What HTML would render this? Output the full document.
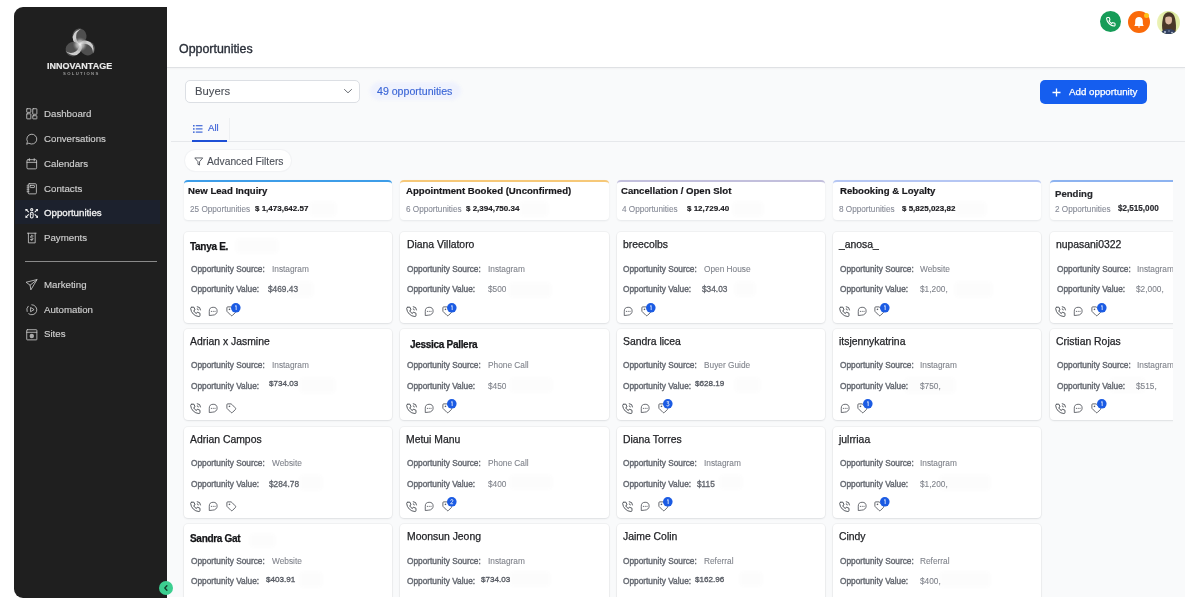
<!DOCTYPE html>
<html><head><meta charset="utf-8"><style>
*{margin:0;padding:0;box-sizing:border-box}
html,body{width:1200px;height:605px;overflow:hidden;background:#fff;font-family:"Liberation Sans", sans-serif}
.t{position:absolute;white-space:nowrap;z-index:3;will-change:transform}
.ic{position:absolute;z-index:3;overflow:visible}
.circ{position:absolute;border-radius:50%;z-index:3}
.circ svg{position:absolute;left:0;top:0}
#sb{position:absolute;left:14.3px;top:7px;width:152.8px;height:590.5px;background:#1f1f1f;border-radius:9px 0 0 9px}
#sbhl{position:absolute;left:14.5px;top:200px;width:145.7px;height:24.4px;background:#1c212d}
#sbdiv{position:absolute;left:24.6px;top:260.8px;width:132.2px;height:1px;background:#8a8a8a}
#toggle{position:absolute;left:159px;top:580.6px;width:14px;height:14px;border-radius:50%;background:#3ccf90;z-index:5}
#toggle svg{position:absolute;left:0;top:0}
#content{position:absolute;left:167.3px;top:67.6px;width:1017.5px;height:529.4px;background:#f9fafb}
#hdrline{position:absolute;left:167.3px;top:66.6px;width:1017.5px;height:1px;background:#dfe1e4;box-shadow:0 1px 2px rgba(0,0,0,.05);z-index:1}
#dd{position:absolute;left:184.7px;top:79.5px;width:175.3px;height:23.8px;background:#fff;border:1px solid #dcdfe4;border-radius:5px;z-index:1}
#pill{position:absolute;left:370px;top:82px;width:91px;height:18px;background:#eff2fd;border-radius:9px;z-index:1;filter:blur(1.5px)}
#btn{position:absolute;left:1039.7px;top:79.6px;width:107.4px;height:24.4px;background:#155eef;border-radius:5px;z-index:1}
#tabline{position:absolute;left:171px;top:140.8px;width:1014px;height:1px;background:#e6e8eb;z-index:1}
#tabul{position:absolute;left:191.9px;top:140px;width:35.1px;height:2px;background:#1d4fd6;z-index:2}
#tabsep{position:absolute;left:228.5px;top:118px;width:1px;height:22px;background:#eef0f2;z-index:1}
#af{position:absolute;left:185px;top:150px;width:106.4px;height:20.7px;background:#fff;border-radius:11px;box-shadow:0 0 0 1px #f2f3f5,0 1px 1.5px rgba(0,0,0,.03);z-index:1}
#kan{position:absolute;left:167.3px;top:170px;width:1005.5px;height:427px;overflow:hidden;z-index:1}
.hc{position:absolute;top:10px;height:40px;background:#fff;border-top:2px solid;border-radius:4px;box-shadow:0 1px 2px rgba(16,24,40,.08)}
.card{position:absolute;height:90.5px;background:#fff;border-radius:4px;box-shadow:0 0 0 1px rgba(16,24,40,.035),0 1px 2px rgba(16,24,40,.08)}
.patch{position:absolute;background:rgba(60,70,90,.016);border-radius:3px;filter:blur(1.5px);z-index:2}
.badge{position:absolute;width:9.5px;height:9.5px;border-radius:50%;background:#1b5be3;color:#fff;font-size:6.6px;line-height:9.5px;text-align:center;z-index:4;font-weight:400;will-change:transform}
#wrap{position:absolute;left:0;top:0;width:1200px;height:605px;}
</style></head><body><div id="wrap">
<div id="sb"></div>
<div id="sbhl"></div>
<svg class="ic" style="left:62px;top:26px" width="36" height="34" viewBox="0 0 36 34">
<defs><radialGradient id="lc" cx="50%" cy="50%" r="50%"><stop offset="0" stop-color="#f5f5f5" stop-opacity="0.95"/><stop offset="0.55" stop-color="#bdbdbd" stop-opacity="0.7"/><stop offset="1" stop-color="#7a7a7a" stop-opacity="0"/></radialGradient></defs>
<g transform="translate(18 18.5) rotate(-8) scale(1.1)">
<g><ellipse cx="0.6" cy="-7.6" rx="6.4" ry="6.9" fill="#4f4f4f"/><path d="M3.2 -14.2 Q-7 -12 -5.6 -4.5 Q-4.6 0.5 1 1.2 Q-2.4 -2.2 -2.6 -6.6 Q-2.4 -11.8 3.2 -14.2Z" fill="#d8d8d8" opacity="0.92"/></g><g transform="rotate(120)"><g><ellipse cx="0.6" cy="-7.6" rx="6.4" ry="6.9" fill="#4f4f4f"/><path d="M3.2 -14.2 Q-7 -12 -5.6 -4.5 Q-4.6 0.5 1 1.2 Q-2.4 -2.2 -2.6 -6.6 Q-2.4 -11.8 3.2 -14.2Z" fill="#d8d8d8" opacity="0.92"/></g></g><g transform="rotate(240)"><g><ellipse cx="0.6" cy="-7.6" rx="6.4" ry="6.9" fill="#4f4f4f"/><path d="M3.2 -14.2 Q-7 -12 -5.6 -4.5 Q-4.6 0.5 1 1.2 Q-2.4 -2.2 -2.6 -6.6 Q-2.4 -11.8 3.2 -14.2Z" fill="#d8d8d8" opacity="0.92"/></g></g>
<circle cx="0" cy="0" r="6.8" fill="url(#lc)"/>
</g></svg>
<div class="t" style="left:47.40px;top:61.98px;font-size:9.0px;line-height:9.0px;color:#ebebeb;font-weight:700;-webkit-text-stroke:0.15px #ebebeb;">INNOVANTAGE</div>
<div class="t" style="left:62.50px;top:71.64px;font-size:4.2px;line-height:4.2px;color:#9a9a9a;font-weight:700;letter-spacing:1.35px;">SOLUTIONS</div>
<svg class="ic" style="left:25.6px;top:108.40px" width="11.6" height="11.6" viewBox="0 0 24 24"><rect x="1.5" y="1.5" width="8.5" height="7.5" rx="0.8" fill="none" stroke="#cdcdcd" stroke-width="1.7" stroke-linecap="round" stroke-linejoin="round"/><rect x="14" y="1.5" width="8.5" height="11.5" rx="0.8" fill="none" stroke="#cdcdcd" stroke-width="1.7" stroke-linecap="round" stroke-linejoin="round"/><rect x="1.5" y="12" width="8.5" height="10.5" rx="0.8" fill="none" stroke="#cdcdcd" stroke-width="1.7" stroke-linecap="round" stroke-linejoin="round"/><rect x="14" y="16" width="8.5" height="6.5" rx="0.8" fill="none" stroke="#cdcdcd" stroke-width="1.7" stroke-linecap="round" stroke-linejoin="round"/></svg>
<div class="t" style="left:43.60px;top:109.08px;font-size:9.7px;line-height:9.7px;color:#cfcfcf;font-weight:400;-webkit-text-stroke:0.15px #cfcfcf;">Dashboard</div>
<svg class="ic" style="left:25.6px;top:133.20px" width="11.6" height="11.6" viewBox="0 0 24 24"><path d="M6.5 21.5A10.3 10.3 0 1 0 3 17.8L1.6 22.6Z" fill="none" stroke="#cdcdcd" stroke-width="1.7" stroke-linecap="round" stroke-linejoin="round"/></svg>
<div class="t" style="left:43.60px;top:133.88px;font-size:9.7px;line-height:9.7px;color:#cfcfcf;font-weight:400;-webkit-text-stroke:0.15px #cfcfcf;">Conversations</div>
<svg class="ic" style="left:25.6px;top:158.00px" width="11.6" height="11.6" viewBox="0 0 24 24"><rect x="2" y="3.5" width="20" height="19" rx="2.2" fill="none" stroke="#cdcdcd" stroke-width="1.7" stroke-linecap="round" stroke-linejoin="round"/><path d="M17 1.3v4.5M7 1.3v4.5M2 9h20" fill="none" stroke="#cdcdcd" stroke-width="1.7" stroke-linecap="round" stroke-linejoin="round"/></svg>
<div class="t" style="left:43.60px;top:158.68px;font-size:9.7px;line-height:9.7px;color:#cfcfcf;font-weight:400;-webkit-text-stroke:0.15px #cfcfcf;">Calendars</div>
<svg class="ic" style="left:25.6px;top:183.00px" width="11.6" height="11.6" viewBox="0 0 24 24"><rect x="4.5" y="1.5" width="17" height="21" rx="2.2" fill="none" stroke="#cdcdcd" stroke-width="1.7" stroke-linecap="round" stroke-linejoin="round"/><path d="M2.2 6h4M2.2 10h4M2.2 14h4M2.2 18h4" fill="none" stroke="#cdcdcd" stroke-width="1.7" stroke-linecap="round" stroke-linejoin="round"/><rect x="8.5" y="5" width="9" height="4.5" rx="1" fill="none" stroke="#cdcdcd" stroke-width="1.7" stroke-linecap="round" stroke-linejoin="round"/></svg>
<div class="t" style="left:43.60px;top:183.68px;font-size:9.7px;line-height:9.7px;color:#cfcfcf;font-weight:400;-webkit-text-stroke:0.15px #cfcfcf;">Contacts</div>
<svg class="ic" style="left:24.6px;top:207.6px" width="13.5" height="10.6" viewBox="0 0 28 22"><g fill="none" stroke="#f3f3f3" stroke-width="2.1" stroke-linecap="round" stroke-linejoin="round"><circle cx="14" cy="3.6" r="2.3"/><rect x="11.1" y="8.6" width="5.8" height="12" rx="2.9"/><path d="M2 3l5.2 5.2M2 19l5.2-5.2M26 3l-5.2 5.2M26 19l-5.2-5.2"/></g><g fill="#f3f3f3"><path d="M1 2h5.2L1 7.2z"/><path d="M1 20h5.2L1 14.8z"/><path d="M27 2h-5.2L27 7.2z"/><path d="M27 20h-5.2L27 14.8z"/><path d="M14 11.5l1.3 1.6-1.3 1.6-1.3-1.6z"/></g></svg>
<div class="t" style="left:43.60px;top:208.08px;font-size:9.7px;line-height:9.7px;color:#f2f2f2;font-weight:400;-webkit-text-stroke:0.3px #f2f2f2;">Opportunities</div>
<svg class="ic" style="left:25.6px;top:232.20px" width="11.6" height="11.6" viewBox="0 0 24 24"><path d="M3 2.5h18M5 2.5v20h14v-20" fill="none" stroke="#cdcdcd" stroke-width="1.7" stroke-linecap="round" stroke-linejoin="round"/><path d="M14.8 8.3h-3.5a1.9 1.9 0 0 0 0 3.8h1.4a1.9 1.9 0 0 1 0 3.8H9.2M12 6.5v1.8M12 15.9v1.8" fill="none" stroke="#cdcdcd" stroke-width="1.7" stroke-linecap="round" stroke-linejoin="round" stroke-width="1.5"/></svg>
<div class="t" style="left:43.60px;top:232.88px;font-size:9.7px;line-height:9.7px;color:#cfcfcf;font-weight:400;-webkit-text-stroke:0.15px #cfcfcf;">Payments</div>
<svg class="ic" style="left:25.6px;top:279.10px" width="11.6" height="11.6" viewBox="0 0 24 24"><path d="M22.5 1.8 10 22.5 8.5 12.8 0.8 7.2Z M22.5 1.8 8.5 12.8" fill="none" stroke="#cdcdcd" stroke-width="1.7" stroke-linecap="round" stroke-linejoin="round"/></svg>
<div class="t" style="left:43.60px;top:279.78px;font-size:9.7px;line-height:9.7px;color:#cfcfcf;font-weight:400;-webkit-text-stroke:0.15px #cfcfcf;">Marketing</div>
<svg class="ic" style="left:25.6px;top:303.85px" width="11.6" height="11.6" viewBox="0 0 24 24"><path d="M12 1.5a10.5 10.5 0 1 1-6.5 18.8" fill="none" stroke="#cdcdcd" stroke-width="1.7" stroke-linecap="round" stroke-linejoin="round"/><path d="M2.2 15.5A10.5 10.5 0 0 1 4.5 4.6" fill="none" stroke="#cdcdcd" stroke-width="1.7" stroke-linecap="round" stroke-linejoin="round"/><path d="M9.5 8v8l6.5-4z" fill="none" stroke="#cdcdcd" stroke-width="1.7" stroke-linecap="round" stroke-linejoin="round" stroke-width="1.6"/></svg>
<div class="t" style="left:43.60px;top:304.53px;font-size:9.7px;line-height:9.7px;color:#cfcfcf;font-weight:400;-webkit-text-stroke:0.15px #cfcfcf;">Automation</div>
<svg class="ic" style="left:25.6px;top:328.60px" width="11.6" height="11.6" viewBox="0 0 24 24"><rect x="1.5" y="1.5" width="21" height="21" rx="1.2" fill="none" stroke="#cdcdcd" stroke-width="1.7" stroke-linecap="round" stroke-linejoin="round"/><path d="M1.5 6.8h21" fill="none" stroke="#cdcdcd" stroke-width="1.7" stroke-linecap="round" stroke-linejoin="round"/><circle cx="12" cy="14.6" r="4.6" fill="#cdcdcd" opacity="0.8"/></svg>
<div class="t" style="left:43.60px;top:329.28px;font-size:9.7px;line-height:9.7px;color:#cfcfcf;font-weight:400;-webkit-text-stroke:0.15px #cfcfcf;">Sites</div>
<div id="sbdiv"></div>
<div id="toggle"><svg width="14" height="14" viewBox="0 0 14 14"><path d="M7.9 4.7 L5.8 7 L7.9 9.3" fill="none" stroke="#123f2c" stroke-width="1.35" stroke-linecap="round" stroke-linejoin="round"/></svg></div>
<div id="hdrline"></div>
<div class="t" style="left:178.70px;top:43.20px;font-size:12.4px;line-height:12.4px;color:#2a2f39;font-weight:400;-webkit-text-stroke:0.35px #2a2f39;">Opportunities</div>
<div id="content"></div>
<div class="circ" style="left:1099.6px;top:10.8px;width:21.7px;height:21.7px;background:#169c58"><svg width="21.7" height="21.7" viewBox="0 0 24 24"><path transform="translate(6.3 6.3) scale(0.47)" d="M22 16.92v3a2 2 0 0 1-2.18 2 19.79 19.79 0 0 1-8.63-3.07 19.5 19.5 0 0 1-6-6 19.79 19.79 0 0 1-3.07-8.67A2 2 0 0 1 4.11 2h3a2 2 0 0 1 2 1.72 12.84 12.84 0 0 0 .7 2.81 2 2 0 0 1-.45 2.11L8.09 9.91a16 16 0 0 0 6 6l1.27-1.27a2 2 0 0 1 2.11-.45 12.84 12.84 0 0 0 2.81.7A2 2 0 0 1 22 16.92z" fill="none" stroke="#fff" stroke-width="2.6"/></svg></div>
<div class="circ" style="left:1128px;top:10.8px;width:22px;height:22px;background:#fa6a0a"><svg width="22" height="22" viewBox="0 0 22 22"><path d="M6.3 15 C7.3 13.5 7.2 12 7.2 10 C7.2 7.6 8.8 6 11 6 C13.2 6 14.8 7.6 14.8 10 C14.8 12 14.7 13.5 15.7 15 Z" fill="#fff"/><path d="M9.8 15.5 H12.2 L11 17 Z" fill="#fff"/></svg></div>
<div class="circ" style="left:1144px;top:12.5px;width:5px;height:5px;background:#ffc21a"></div>
<div class="circ" style="left:1156.8px;top:11px;width:23px;height:23px;overflow:hidden">
<svg width="23" height="23" viewBox="0 0 23 23"><defs><linearGradient id="avbg" x1="0" y1="0" x2="1" y2="0"><stop offset="0" stop-color="#eef3b9"/><stop offset="0.5" stop-color="#d5e594"/><stop offset="1" stop-color="#e3eda9"/></linearGradient></defs>
<rect width="23" height="23" fill="url(#avbg)"/>
<path d="M6 21 C4.5 16 5 12 5.8 8 C6.5 3.5 8.5 1.2 11.8 1.2 C15.2 1.2 17.4 3.5 18.2 8 C18.9 12 19.5 16 18.5 21 Z" fill="#4a3828"/>
<ellipse cx="11.6" cy="8.8" rx="3.4" ry="4.6" fill="#dcb9a0"/>
<path d="M8.3 6.5 C9 4 10.5 3.6 11.8 3.6 C13.4 3.6 14.6 4.4 15 6.5 C13.5 5.2 10 5.2 8.3 6.5Z" fill="#4a3828"/>
<path d="M3.5 23 C4.5 19.5 7.5 18 11.5 18 C15.5 18 18.5 19.5 19.5 23Z" fill="#33415f"/>
<circle cx="8" cy="21" r="0.9" fill="#c9d2e8"/><circle cx="12" cy="20" r="0.7" fill="#9fb0d0"/><circle cx="15" cy="21.5" r="0.8" fill="#c9d2e8"/>
</svg></div>
<div id="dd"></div>
<div class="t" style="left:194.70px;top:85.77px;font-size:11.25px;line-height:11.25px;color:#4b4f57;font-weight:400;-webkit-text-stroke:0.1px #4b4f57;">Buyers</div>
<svg class="ic" style="left:343px;top:87px" width="10" height="8" viewBox="0 0 10 8"><path d="M1.5 2.5 L5 5.8 L8.5 2.5" fill="none" stroke="#6b6f76" stroke-width="1" stroke-linecap="round"/></svg>
<div id="pill"></div>
<div class="t" style="left:377.00px;top:85.72px;font-size:10.6px;line-height:10.6px;color:#3b66d6;font-weight:400;-webkit-text-stroke:0.15px #3b66d6;">49 opportunities</div>
<div id="btn"></div>
<svg class="ic" style="left:1051.5px;top:87.5px" width="9" height="9" viewBox="0 0 9 9"><path d="M4.5 0.5 V8.5 M0.5 4.5 H8.5" stroke="#fff" stroke-width="1.3"/></svg>
<div class="t" style="left:1069.00px;top:87.04px;font-size:9.75px;line-height:9.75px;color:#ffffff;font-weight:400;-webkit-text-stroke:0.25px #fff;">Add opportunity</div>
<div id="tabline"></div><div id="tabul"></div><div id="tabsep"></div>
<svg class="ic" style="left:192.7px;top:124.7px" width="10" height="8" viewBox="0 0 10 8"><g fill="#4169d8"><rect x="0" y="0" width="1.6" height="1.5"/><rect x="0" y="3.2" width="1.6" height="1.5"/><rect x="0" y="6.4" width="1.6" height="1.5"/><rect x="2.8" y="0.1" width="6.7" height="1.2"/><rect x="2.8" y="3.3" width="6.7" height="1.2"/><rect x="2.8" y="6.5" width="6.7" height="1.2"/></g></svg>
<div class="t" style="left:207.80px;top:123.47px;font-size:9.6px;line-height:9.6px;color:#3f63d8;font-weight:400;-webkit-text-stroke:0.2px #3f63d8;">All</div>
<div id="af"></div>
<svg class="ic" style="left:193.6px;top:157px" width="9.5" height="9" viewBox="0 0 24 22"><path d="M2 2h20l-8 9.5v8.5l-4-2v-6.5z" fill="none" stroke="#4b4f58" stroke-width="2.2" stroke-linejoin="round"/></svg>
<div class="t" style="left:206.60px;top:156.99px;font-size:10.28px;line-height:10.28px;color:#4b4f58;font-weight:400;-webkit-text-stroke:0.1px #4b4f58;">Advanced Filters</div>
<div id="kan">
<div class="hc" style="left:17.20px;width:207.70px;border-top-color:#3d9de8"></div>
<div class="t" style="left:21.20px;top:15.77px;font-size:9.6px;line-height:9.6px;color:#18181c;font-weight:700;-webkit-text-stroke:0.2px #18181c;">New Lead Inquiry</div>
<div class="t" style="left:22.50px;top:35.65px;font-size:8.2px;line-height:8.2px;color:#868a96;font-weight:400;-webkit-text-stroke:0.1px #868a96;">25 Opportunities</div>
<div class="t" style="left:87.70px;top:34.72px;font-size:8.0px;line-height:8.0px;color:#18181c;font-weight:700;-webkit-text-stroke:0.15px #18181c;">$ 1,473,642.57</div>
<div class="card" style="left:17.20px;top:62.00px;width:207.70px;height:90.6px"></div>
<div class="t" style="left:23.20px;top:71.63px;font-size:10.0px;line-height:10.0px;color:#141518;font-weight:700;letter-spacing:-0.3px;-webkit-text-stroke:0.25px #141518;">Tanya E.</div>
<div class="t" style="left:23.80px;top:94.67px;font-size:8.3px;line-height:8.3px;color:#666a72;font-weight:400;-webkit-text-stroke:0.4px #666a72;">Opportunity Source:</div>
<div class="t" style="left:104.40px;top:94.67px;font-size:8.3px;line-height:8.3px;color:#80848c;font-weight:400;-webkit-text-stroke:0.1px #80848c;">Instagram</div>
<div class="t" style="left:23.80px;top:115.17px;font-size:8.3px;line-height:8.3px;color:#666a72;font-weight:400;-webkit-text-stroke:0.4px #666a72;">Opportunity Value:</div>
<div class="t" style="left:101.20px;top:115.17px;font-size:8.3px;line-height:8.3px;color:#5f636b;font-weight:400;-webkit-text-stroke:0.3px #5f636b;">$469.43</div>
<svg class="ic" style="left:21.60px;top:135.00px" width="13.2" height="13.2" viewBox="0 0 24 24" fill="none" stroke="#50545b" stroke-width="1.75" stroke-linecap="round" stroke-linejoin="round"><path d="M5 4h4l2 5l-2.5 1.5a11 11 0 0 0 5 5l1.5 -2.5l5 2v4a2 2 0 0 1 -2 2a16 16 0 0 1 -15 -15a2 2 0 0 1 2 -2"/><path d="M15 7a2 2 0 0 1 2 2M15 3a6 6 0 0 1 6 6"/></svg>
<svg class="ic" style="left:40.70px;top:136.30px" width="10.2" height="10.2" viewBox="0 0 24 24" fill="none" stroke="#50545b" stroke-width="2" stroke-linecap="round" stroke-linejoin="round"><path d="M3 21.5V12.5A9.25 9.25 0 1 1 12.25 21.5Z"/><g fill="#5a5e65" stroke="none"><circle cx="8" cy="12.5" r="1.35"/><circle cx="12.25" cy="12.5" r="1.35"/><circle cx="16.5" cy="12.5" r="1.35"/></g></svg>
<svg class="ic" style="left:58.40px;top:136.00px" width="10.6" height="10.6" viewBox="0 0 24 24" fill="none" stroke="#50545b" stroke-width="2" stroke-linecap="round" stroke-linejoin="round"><path d="M12.586 2.586A2 2 0 0 0 11.172 2H4a2 2 0 0 0-2 2v7.172a2 2 0 0 0 .586 1.414l8.704 8.704a2.426 2.426 0 0 0 3.42 0l6.58-6.58a2.426 2.426 0 0 0 0-3.42z"/><circle cx="7.5" cy="7.5" r=".8"/></svg>
<svg class="ic" style="left:63.80px;top:132.90px;z-index:4" width="9.6" height="9.6" viewBox="-4.8 -4.8 9.6 9.6"><circle r="4.8" fill="#1b5be3"/><g transform="scale(0.78)"><path d="M-1 -1.9 L0.5 -2.9 V2.9" fill="none" stroke="#fff" stroke-width="1" stroke-linejoin="round"/></g></svg>
<div class="card" style="left:17.20px;top:158.50px;width:207.70px;height:91.6px"></div>
<div class="t" style="left:23.00px;top:166.79px;font-size:10.4px;line-height:10.4px;color:#232428;font-weight:400;-webkit-text-stroke:0.25px #232428;">Adrian x Jasmine</div>
<div class="t" style="left:23.80px;top:191.17px;font-size:8.3px;line-height:8.3px;color:#666a72;font-weight:400;-webkit-text-stroke:0.4px #666a72;">Opportunity Source:</div>
<div class="t" style="left:104.40px;top:191.17px;font-size:8.3px;line-height:8.3px;color:#80848c;font-weight:400;-webkit-text-stroke:0.1px #80848c;">Instagram</div>
<div class="t" style="left:23.80px;top:211.67px;font-size:8.3px;line-height:8.3px;color:#666a72;font-weight:400;-webkit-text-stroke:0.4px #666a72;">Opportunity Value:</div>
<div class="t" style="left:101.50px;top:210.14px;font-size:8.1px;line-height:8.1px;color:#5a5e66;font-weight:400;-webkit-text-stroke:0.35px #5a5e66;">$734.03</div>
<svg class="ic" style="left:21.60px;top:231.50px" width="13.2" height="13.2" viewBox="0 0 24 24" fill="none" stroke="#50545b" stroke-width="1.75" stroke-linecap="round" stroke-linejoin="round"><path d="M5 4h4l2 5l-2.5 1.5a11 11 0 0 0 5 5l1.5 -2.5l5 2v4a2 2 0 0 1 -2 2a16 16 0 0 1 -15 -15a2 2 0 0 1 2 -2"/><path d="M15 7a2 2 0 0 1 2 2M15 3a6 6 0 0 1 6 6"/></svg>
<svg class="ic" style="left:40.70px;top:232.80px" width="10.2" height="10.2" viewBox="0 0 24 24" fill="none" stroke="#50545b" stroke-width="2" stroke-linecap="round" stroke-linejoin="round"><path d="M3 21.5V12.5A9.25 9.25 0 1 1 12.25 21.5Z"/><g fill="#5a5e65" stroke="none"><circle cx="8" cy="12.5" r="1.35"/><circle cx="12.25" cy="12.5" r="1.35"/><circle cx="16.5" cy="12.5" r="1.35"/></g></svg>
<svg class="ic" style="left:58.40px;top:232.50px" width="10.6" height="10.6" viewBox="0 0 24 24" fill="none" stroke="#50545b" stroke-width="2" stroke-linecap="round" stroke-linejoin="round"><path d="M12.586 2.586A2 2 0 0 0 11.172 2H4a2 2 0 0 0-2 2v7.172a2 2 0 0 0 .586 1.414l8.704 8.704a2.426 2.426 0 0 0 3.42 0l6.58-6.58a2.426 2.426 0 0 0 0-3.42z"/><circle cx="7.5" cy="7.5" r=".8"/></svg>
<div class="card" style="left:17.20px;top:256.50px;width:207.70px;height:91.3px"></div>
<div class="t" style="left:23.00px;top:264.79px;font-size:10.4px;line-height:10.4px;color:#232428;font-weight:400;-webkit-text-stroke:0.25px #232428;">Adrian Campos</div>
<div class="t" style="left:23.80px;top:289.17px;font-size:8.3px;line-height:8.3px;color:#666a72;font-weight:400;-webkit-text-stroke:0.4px #666a72;">Opportunity Source:</div>
<div class="t" style="left:104.40px;top:289.17px;font-size:8.3px;line-height:8.3px;color:#80848c;font-weight:400;-webkit-text-stroke:0.1px #80848c;">Website</div>
<div class="t" style="left:23.80px;top:309.67px;font-size:8.3px;line-height:8.3px;color:#666a72;font-weight:400;-webkit-text-stroke:0.4px #666a72;">Opportunity Value:</div>
<div class="t" style="left:101.50px;top:309.67px;font-size:8.3px;line-height:8.3px;color:#5f636b;font-weight:400;-webkit-text-stroke:0.3px #5f636b;">$284.78</div>
<svg class="ic" style="left:21.60px;top:329.50px" width="13.2" height="13.2" viewBox="0 0 24 24" fill="none" stroke="#50545b" stroke-width="1.75" stroke-linecap="round" stroke-linejoin="round"><path d="M5 4h4l2 5l-2.5 1.5a11 11 0 0 0 5 5l1.5 -2.5l5 2v4a2 2 0 0 1 -2 2a16 16 0 0 1 -15 -15a2 2 0 0 1 2 -2"/><path d="M15 7a2 2 0 0 1 2 2M15 3a6 6 0 0 1 6 6"/></svg>
<svg class="ic" style="left:40.70px;top:330.80px" width="10.2" height="10.2" viewBox="0 0 24 24" fill="none" stroke="#50545b" stroke-width="2" stroke-linecap="round" stroke-linejoin="round"><path d="M3 21.5V12.5A9.25 9.25 0 1 1 12.25 21.5Z"/><g fill="#5a5e65" stroke="none"><circle cx="8" cy="12.5" r="1.35"/><circle cx="12.25" cy="12.5" r="1.35"/><circle cx="16.5" cy="12.5" r="1.35"/></g></svg>
<svg class="ic" style="left:58.40px;top:330.50px" width="10.6" height="10.6" viewBox="0 0 24 24" fill="none" stroke="#50545b" stroke-width="2" stroke-linecap="round" stroke-linejoin="round"><path d="M12.586 2.586A2 2 0 0 0 11.172 2H4a2 2 0 0 0-2 2v7.172a2 2 0 0 0 .586 1.414l8.704 8.704a2.426 2.426 0 0 0 3.42 0l6.58-6.58a2.426 2.426 0 0 0 0-3.42z"/><circle cx="7.5" cy="7.5" r=".8"/></svg>
<div class="card" style="left:17.20px;top:353.90px;width:207.70px;height:90.5px"></div>
<div class="t" style="left:22.80px;top:363.53px;font-size:10.0px;line-height:10.0px;color:#141518;font-weight:700;letter-spacing:-0.3px;-webkit-text-stroke:0.25px #141518;">Sandra Gat</div>
<div class="t" style="left:23.80px;top:386.57px;font-size:8.3px;line-height:8.3px;color:#666a72;font-weight:400;-webkit-text-stroke:0.4px #666a72;">Opportunity Source:</div>
<div class="t" style="left:104.40px;top:386.57px;font-size:8.3px;line-height:8.3px;color:#80848c;font-weight:400;-webkit-text-stroke:0.1px #80848c;">Website</div>
<div class="t" style="left:23.80px;top:407.07px;font-size:8.3px;line-height:8.3px;color:#666a72;font-weight:400;-webkit-text-stroke:0.4px #666a72;">Opportunity Value:</div>
<div class="t" style="left:98.90px;top:405.54px;font-size:8.1px;line-height:8.1px;color:#5a5e66;font-weight:400;-webkit-text-stroke:0.35px #5a5e66;">$403.91</div>
<div class="hc" style="left:233.20px;width:208.70px;border-top-color:#f6c878"></div>
<div class="t" style="left:238.70px;top:15.77px;font-size:9.6px;line-height:9.6px;color:#18181c;font-weight:700;-webkit-text-stroke:0.2px #18181c;">Appointment Booked (Unconfirmed)</div>
<div class="t" style="left:238.50px;top:35.65px;font-size:8.2px;line-height:8.2px;color:#868a96;font-weight:400;-webkit-text-stroke:0.1px #868a96;">6 Opportunities</div>
<div class="t" style="left:299.20px;top:34.72px;font-size:8.0px;line-height:8.0px;color:#18181c;font-weight:700;-webkit-text-stroke:0.15px #18181c;">$ 2,394,750.34</div>
<div class="card" style="left:233.20px;top:62.00px;width:208.70px;height:90.6px"></div>
<div class="t" style="left:239.40px;top:70.29px;font-size:10.4px;line-height:10.4px;color:#232428;font-weight:400;-webkit-text-stroke:0.25px #232428;">Diana Villatoro</div>
<div class="t" style="left:239.80px;top:94.67px;font-size:8.3px;line-height:8.3px;color:#666a72;font-weight:400;-webkit-text-stroke:0.4px #666a72;">Opportunity Source:</div>
<div class="t" style="left:320.40px;top:94.67px;font-size:8.3px;line-height:8.3px;color:#80848c;font-weight:400;-webkit-text-stroke:0.1px #80848c;">Instagram</div>
<div class="t" style="left:239.80px;top:115.17px;font-size:8.3px;line-height:8.3px;color:#666a72;font-weight:400;-webkit-text-stroke:0.4px #666a72;">Opportunity Value:</div>
<div class="t" style="left:320.50px;top:115.17px;font-size:8.3px;line-height:8.3px;color:#80848c;font-weight:400;-webkit-text-stroke:0.1px #80848c;">$500</div>
<svg class="ic" style="left:237.60px;top:135.00px" width="13.2" height="13.2" viewBox="0 0 24 24" fill="none" stroke="#50545b" stroke-width="1.75" stroke-linecap="round" stroke-linejoin="round"><path d="M5 4h4l2 5l-2.5 1.5a11 11 0 0 0 5 5l1.5 -2.5l5 2v4a2 2 0 0 1 -2 2a16 16 0 0 1 -15 -15a2 2 0 0 1 2 -2"/><path d="M15 7a2 2 0 0 1 2 2M15 3a6 6 0 0 1 6 6"/></svg>
<svg class="ic" style="left:256.70px;top:136.30px" width="10.2" height="10.2" viewBox="0 0 24 24" fill="none" stroke="#50545b" stroke-width="2" stroke-linecap="round" stroke-linejoin="round"><path d="M3 21.5V12.5A9.25 9.25 0 1 1 12.25 21.5Z"/><g fill="#5a5e65" stroke="none"><circle cx="8" cy="12.5" r="1.35"/><circle cx="12.25" cy="12.5" r="1.35"/><circle cx="16.5" cy="12.5" r="1.35"/></g></svg>
<svg class="ic" style="left:274.40px;top:136.00px" width="10.6" height="10.6" viewBox="0 0 24 24" fill="none" stroke="#50545b" stroke-width="2" stroke-linecap="round" stroke-linejoin="round"><path d="M12.586 2.586A2 2 0 0 0 11.172 2H4a2 2 0 0 0-2 2v7.172a2 2 0 0 0 .586 1.414l8.704 8.704a2.426 2.426 0 0 0 3.42 0l6.58-6.58a2.426 2.426 0 0 0 0-3.42z"/><circle cx="7.5" cy="7.5" r=".8"/></svg>
<svg class="ic" style="left:279.80px;top:132.90px;z-index:4" width="9.6" height="9.6" viewBox="-4.8 -4.8 9.6 9.6"><circle r="4.8" fill="#1b5be3"/><g transform="scale(0.78)"><path d="M-1 -1.9 L0.5 -2.9 V2.9" fill="none" stroke="#fff" stroke-width="1" stroke-linejoin="round"/></g></svg>
<div class="card" style="left:233.20px;top:158.50px;width:208.70px;height:91.6px"></div>
<div class="t" style="left:243.20px;top:169.83px;font-size:10.0px;line-height:10.0px;color:#141518;font-weight:700;letter-spacing:-0.3px;-webkit-text-stroke:0.25px #141518;">Jessica Pallera</div>
<div class="t" style="left:239.80px;top:191.17px;font-size:8.3px;line-height:8.3px;color:#666a72;font-weight:400;-webkit-text-stroke:0.4px #666a72;">Opportunity Source:</div>
<div class="t" style="left:320.40px;top:191.17px;font-size:8.3px;line-height:8.3px;color:#80848c;font-weight:400;-webkit-text-stroke:0.1px #80848c;">Phone Call</div>
<div class="t" style="left:239.80px;top:211.67px;font-size:8.3px;line-height:8.3px;color:#666a72;font-weight:400;-webkit-text-stroke:0.4px #666a72;">Opportunity Value:</div>
<div class="t" style="left:320.50px;top:211.67px;font-size:8.3px;line-height:8.3px;color:#80848c;font-weight:400;-webkit-text-stroke:0.1px #80848c;">$450</div>
<svg class="ic" style="left:237.60px;top:231.50px" width="13.2" height="13.2" viewBox="0 0 24 24" fill="none" stroke="#50545b" stroke-width="1.75" stroke-linecap="round" stroke-linejoin="round"><path d="M5 4h4l2 5l-2.5 1.5a11 11 0 0 0 5 5l1.5 -2.5l5 2v4a2 2 0 0 1 -2 2a16 16 0 0 1 -15 -15a2 2 0 0 1 2 -2"/><path d="M15 7a2 2 0 0 1 2 2M15 3a6 6 0 0 1 6 6"/></svg>
<svg class="ic" style="left:256.70px;top:232.80px" width="10.2" height="10.2" viewBox="0 0 24 24" fill="none" stroke="#50545b" stroke-width="2" stroke-linecap="round" stroke-linejoin="round"><path d="M3 21.5V12.5A9.25 9.25 0 1 1 12.25 21.5Z"/><g fill="#5a5e65" stroke="none"><circle cx="8" cy="12.5" r="1.35"/><circle cx="12.25" cy="12.5" r="1.35"/><circle cx="16.5" cy="12.5" r="1.35"/></g></svg>
<svg class="ic" style="left:274.40px;top:232.50px" width="10.6" height="10.6" viewBox="0 0 24 24" fill="none" stroke="#50545b" stroke-width="2" stroke-linecap="round" stroke-linejoin="round"><path d="M12.586 2.586A2 2 0 0 0 11.172 2H4a2 2 0 0 0-2 2v7.172a2 2 0 0 0 .586 1.414l8.704 8.704a2.426 2.426 0 0 0 3.42 0l6.58-6.58a2.426 2.426 0 0 0 0-3.42z"/><circle cx="7.5" cy="7.5" r=".8"/></svg>
<svg class="ic" style="left:279.80px;top:229.40px;z-index:4" width="9.6" height="9.6" viewBox="-4.8 -4.8 9.6 9.6"><circle r="4.8" fill="#1b5be3"/><g transform="scale(0.78)"><path d="M-1 -1.9 L0.5 -2.9 V2.9" fill="none" stroke="#fff" stroke-width="1" stroke-linejoin="round"/></g></svg>
<div class="card" style="left:233.20px;top:256.50px;width:208.70px;height:91.3px"></div>
<div class="t" style="left:239.20px;top:264.79px;font-size:10.4px;line-height:10.4px;color:#232428;font-weight:400;-webkit-text-stroke:0.25px #232428;">Metui Manu</div>
<div class="t" style="left:239.80px;top:289.17px;font-size:8.3px;line-height:8.3px;color:#666a72;font-weight:400;-webkit-text-stroke:0.4px #666a72;">Opportunity Source:</div>
<div class="t" style="left:320.40px;top:289.17px;font-size:8.3px;line-height:8.3px;color:#80848c;font-weight:400;-webkit-text-stroke:0.1px #80848c;">Phone Call</div>
<div class="t" style="left:239.80px;top:309.67px;font-size:8.3px;line-height:8.3px;color:#666a72;font-weight:400;-webkit-text-stroke:0.4px #666a72;">Opportunity Value:</div>
<div class="t" style="left:320.50px;top:309.67px;font-size:8.3px;line-height:8.3px;color:#80848c;font-weight:400;-webkit-text-stroke:0.1px #80848c;">$400</div>
<svg class="ic" style="left:237.60px;top:329.50px" width="13.2" height="13.2" viewBox="0 0 24 24" fill="none" stroke="#50545b" stroke-width="1.75" stroke-linecap="round" stroke-linejoin="round"><path d="M5 4h4l2 5l-2.5 1.5a11 11 0 0 0 5 5l1.5 -2.5l5 2v4a2 2 0 0 1 -2 2a16 16 0 0 1 -15 -15a2 2 0 0 1 2 -2"/><path d="M15 7a2 2 0 0 1 2 2M15 3a6 6 0 0 1 6 6"/></svg>
<svg class="ic" style="left:256.70px;top:330.80px" width="10.2" height="10.2" viewBox="0 0 24 24" fill="none" stroke="#50545b" stroke-width="2" stroke-linecap="round" stroke-linejoin="round"><path d="M3 21.5V12.5A9.25 9.25 0 1 1 12.25 21.5Z"/><g fill="#5a5e65" stroke="none"><circle cx="8" cy="12.5" r="1.35"/><circle cx="12.25" cy="12.5" r="1.35"/><circle cx="16.5" cy="12.5" r="1.35"/></g></svg>
<svg class="ic" style="left:274.40px;top:330.50px" width="10.6" height="10.6" viewBox="0 0 24 24" fill="none" stroke="#50545b" stroke-width="2" stroke-linecap="round" stroke-linejoin="round"><path d="M12.586 2.586A2 2 0 0 0 11.172 2H4a2 2 0 0 0-2 2v7.172a2 2 0 0 0 .586 1.414l8.704 8.704a2.426 2.426 0 0 0 3.42 0l6.58-6.58a2.426 2.426 0 0 0 0-3.42z"/><circle cx="7.5" cy="7.5" r=".8"/></svg>
<svg class="ic" style="left:279.80px;top:327.40px;z-index:4" width="9.6" height="9.6" viewBox="-4.8 -4.8 9.6 9.6"><circle r="4.8" fill="#1b5be3"/><g transform="scale(0.78)"><path d="M-1.5 -1.5 Q-1.3 -2.9 0 -2.9 Q1.4 -2.9 1.4 -1.5 Q1.4 -0.6 0.2 0.5 L-1.6 2.5 H1.7" fill="none" stroke="#fff" stroke-width="0.95" stroke-linejoin="round"/></g></svg>
<div class="card" style="left:233.20px;top:353.90px;width:208.70px;height:90.5px"></div>
<div class="t" style="left:239.40px;top:362.19px;font-size:10.4px;line-height:10.4px;color:#232428;font-weight:400;-webkit-text-stroke:0.25px #232428;">Moonsun Jeong</div>
<div class="t" style="left:239.80px;top:386.57px;font-size:8.3px;line-height:8.3px;color:#666a72;font-weight:400;-webkit-text-stroke:0.4px #666a72;">Opportunity Source:</div>
<div class="t" style="left:320.40px;top:386.57px;font-size:8.3px;line-height:8.3px;color:#80848c;font-weight:400;-webkit-text-stroke:0.1px #80848c;">Instagram</div>
<div class="t" style="left:239.80px;top:407.07px;font-size:8.3px;line-height:8.3px;color:#666a72;font-weight:400;-webkit-text-stroke:0.4px #666a72;">Opportunity Value:</div>
<div class="t" style="left:313.50px;top:405.54px;font-size:8.1px;line-height:8.1px;color:#5a5e66;font-weight:400;-webkit-text-stroke:0.35px #5a5e66;">$734.03</div>
<div class="hc" style="left:449.50px;width:208.20px;border-top-color:#c2bfdc"></div>
<div class="t" style="left:454.10px;top:15.77px;font-size:9.6px;line-height:9.6px;color:#18181c;font-weight:700;-webkit-text-stroke:0.2px #18181c;">Cancellation / Open Slot</div>
<div class="t" style="left:454.80px;top:35.65px;font-size:8.2px;line-height:8.2px;color:#868a96;font-weight:400;-webkit-text-stroke:0.1px #868a96;">4 Opportunities</div>
<div class="t" style="left:519.70px;top:34.72px;font-size:8.0px;line-height:8.0px;color:#18181c;font-weight:700;-webkit-text-stroke:0.15px #18181c;">$ 12,729.40</div>
<div class="card" style="left:449.50px;top:62.00px;width:208.20px;height:90.6px"></div>
<div class="t" style="left:455.70px;top:70.29px;font-size:10.4px;line-height:10.4px;color:#232428;font-weight:400;-webkit-text-stroke:0.25px #232428;">breecolbs</div>
<div class="t" style="left:456.10px;top:94.67px;font-size:8.3px;line-height:8.3px;color:#666a72;font-weight:400;-webkit-text-stroke:0.4px #666a72;">Opportunity Source:</div>
<div class="t" style="left:536.70px;top:94.67px;font-size:8.3px;line-height:8.3px;color:#80848c;font-weight:400;-webkit-text-stroke:0.1px #80848c;">Open House</div>
<div class="t" style="left:456.10px;top:115.17px;font-size:8.3px;line-height:8.3px;color:#666a72;font-weight:400;-webkit-text-stroke:0.4px #666a72;">Opportunity Value:</div>
<div class="t" style="left:534.30px;top:115.17px;font-size:8.3px;line-height:8.3px;color:#5f636b;font-weight:400;-webkit-text-stroke:0.3px #5f636b;">$34.03</div>
<svg class="ic" style="left:456.00px;top:136.30px" width="10.2" height="10.2" viewBox="0 0 24 24" fill="none" stroke="#50545b" stroke-width="2" stroke-linecap="round" stroke-linejoin="round"><path d="M3 21.5V12.5A9.25 9.25 0 1 1 12.25 21.5Z"/><g fill="#5a5e65" stroke="none"><circle cx="8" cy="12.5" r="1.35"/><circle cx="12.25" cy="12.5" r="1.35"/><circle cx="16.5" cy="12.5" r="1.35"/></g></svg>
<svg class="ic" style="left:473.70px;top:136.00px" width="10.6" height="10.6" viewBox="0 0 24 24" fill="none" stroke="#50545b" stroke-width="2" stroke-linecap="round" stroke-linejoin="round"><path d="M12.586 2.586A2 2 0 0 0 11.172 2H4a2 2 0 0 0-2 2v7.172a2 2 0 0 0 .586 1.414l8.704 8.704a2.426 2.426 0 0 0 3.42 0l6.58-6.58a2.426 2.426 0 0 0 0-3.42z"/><circle cx="7.5" cy="7.5" r=".8"/></svg>
<svg class="ic" style="left:479.10px;top:132.90px;z-index:4" width="9.6" height="9.6" viewBox="-4.8 -4.8 9.6 9.6"><circle r="4.8" fill="#1b5be3"/><g transform="scale(0.78)"><path d="M-1 -1.9 L0.5 -2.9 V2.9" fill="none" stroke="#fff" stroke-width="1" stroke-linejoin="round"/></g></svg>
<div class="card" style="left:449.50px;top:158.50px;width:208.20px;height:91.6px"></div>
<div class="t" style="left:455.70px;top:166.79px;font-size:10.4px;line-height:10.4px;color:#232428;font-weight:400;-webkit-text-stroke:0.25px #232428;">Sandra licea</div>
<div class="t" style="left:456.10px;top:191.17px;font-size:8.3px;line-height:8.3px;color:#666a72;font-weight:400;-webkit-text-stroke:0.4px #666a72;">Opportunity Source:</div>
<div class="t" style="left:536.70px;top:191.17px;font-size:8.3px;line-height:8.3px;color:#80848c;font-weight:400;-webkit-text-stroke:0.1px #80848c;">Buyer Guide</div>
<div class="t" style="left:456.10px;top:211.67px;font-size:8.3px;line-height:8.3px;color:#666a72;font-weight:400;-webkit-text-stroke:0.4px #666a72;">Opportunity Value:</div>
<div class="t" style="left:528.00px;top:210.14px;font-size:8.1px;line-height:8.1px;color:#5a5e66;font-weight:400;-webkit-text-stroke:0.35px #5a5e66;">$628.19</div>
<svg class="ic" style="left:453.90px;top:231.50px" width="13.2" height="13.2" viewBox="0 0 24 24" fill="none" stroke="#50545b" stroke-width="1.75" stroke-linecap="round" stroke-linejoin="round"><path d="M5 4h4l2 5l-2.5 1.5a11 11 0 0 0 5 5l1.5 -2.5l5 2v4a2 2 0 0 1 -2 2a16 16 0 0 1 -15 -15a2 2 0 0 1 2 -2"/><path d="M15 7a2 2 0 0 1 2 2M15 3a6 6 0 0 1 6 6"/></svg>
<svg class="ic" style="left:473.00px;top:232.80px" width="10.2" height="10.2" viewBox="0 0 24 24" fill="none" stroke="#50545b" stroke-width="2" stroke-linecap="round" stroke-linejoin="round"><path d="M3 21.5V12.5A9.25 9.25 0 1 1 12.25 21.5Z"/><g fill="#5a5e65" stroke="none"><circle cx="8" cy="12.5" r="1.35"/><circle cx="12.25" cy="12.5" r="1.35"/><circle cx="16.5" cy="12.5" r="1.35"/></g></svg>
<svg class="ic" style="left:490.70px;top:232.50px" width="10.6" height="10.6" viewBox="0 0 24 24" fill="none" stroke="#50545b" stroke-width="2" stroke-linecap="round" stroke-linejoin="round"><path d="M12.586 2.586A2 2 0 0 0 11.172 2H4a2 2 0 0 0-2 2v7.172a2 2 0 0 0 .586 1.414l8.704 8.704a2.426 2.426 0 0 0 3.42 0l6.58-6.58a2.426 2.426 0 0 0 0-3.42z"/><circle cx="7.5" cy="7.5" r=".8"/></svg>
<svg class="ic" style="left:496.10px;top:229.40px;z-index:4" width="9.6" height="9.6" viewBox="-4.8 -4.8 9.6 9.6"><circle r="4.8" fill="#1b5be3"/><g transform="scale(0.78)"><path d="M-1.4 -2.7 H1.3 L-0.1 -0.5 Q1.6 -0.5 1.6 1.1 Q1.6 2.8 0 2.8 Q-1.2 2.8 -1.6 1.8" fill="none" stroke="#fff" stroke-width="0.95" stroke-linejoin="round"/></g></svg>
<div class="card" style="left:449.50px;top:256.50px;width:208.20px;height:91.3px"></div>
<div class="t" style="left:455.70px;top:264.79px;font-size:10.4px;line-height:10.4px;color:#232428;font-weight:400;-webkit-text-stroke:0.25px #232428;">Diana Torres</div>
<div class="t" style="left:456.10px;top:289.17px;font-size:8.3px;line-height:8.3px;color:#666a72;font-weight:400;-webkit-text-stroke:0.4px #666a72;">Opportunity Source:</div>
<div class="t" style="left:536.70px;top:289.17px;font-size:8.3px;line-height:8.3px;color:#80848c;font-weight:400;-webkit-text-stroke:0.1px #80848c;">Instagram</div>
<div class="t" style="left:456.10px;top:309.67px;font-size:8.3px;line-height:8.3px;color:#666a72;font-weight:400;-webkit-text-stroke:0.4px #666a72;">Opportunity Value:</div>
<div class="t" style="left:529.50px;top:309.67px;font-size:8.3px;line-height:8.3px;color:#5f636b;font-weight:400;-webkit-text-stroke:0.3px #5f636b;">$115</div>
<svg class="ic" style="left:453.90px;top:329.50px" width="13.2" height="13.2" viewBox="0 0 24 24" fill="none" stroke="#50545b" stroke-width="1.75" stroke-linecap="round" stroke-linejoin="round"><path d="M5 4h4l2 5l-2.5 1.5a11 11 0 0 0 5 5l1.5 -2.5l5 2v4a2 2 0 0 1 -2 2a16 16 0 0 1 -15 -15a2 2 0 0 1 2 -2"/><path d="M15 7a2 2 0 0 1 2 2M15 3a6 6 0 0 1 6 6"/></svg>
<svg class="ic" style="left:473.00px;top:330.80px" width="10.2" height="10.2" viewBox="0 0 24 24" fill="none" stroke="#50545b" stroke-width="2" stroke-linecap="round" stroke-linejoin="round"><path d="M3 21.5V12.5A9.25 9.25 0 1 1 12.25 21.5Z"/><g fill="#5a5e65" stroke="none"><circle cx="8" cy="12.5" r="1.35"/><circle cx="12.25" cy="12.5" r="1.35"/><circle cx="16.5" cy="12.5" r="1.35"/></g></svg>
<svg class="ic" style="left:490.70px;top:330.50px" width="10.6" height="10.6" viewBox="0 0 24 24" fill="none" stroke="#50545b" stroke-width="2" stroke-linecap="round" stroke-linejoin="round"><path d="M12.586 2.586A2 2 0 0 0 11.172 2H4a2 2 0 0 0-2 2v7.172a2 2 0 0 0 .586 1.414l8.704 8.704a2.426 2.426 0 0 0 3.42 0l6.58-6.58a2.426 2.426 0 0 0 0-3.42z"/><circle cx="7.5" cy="7.5" r=".8"/></svg>
<svg class="ic" style="left:496.10px;top:327.40px;z-index:4" width="9.6" height="9.6" viewBox="-4.8 -4.8 9.6 9.6"><circle r="4.8" fill="#1b5be3"/><g transform="scale(0.78)"><path d="M-1 -1.9 L0.5 -2.9 V2.9" fill="none" stroke="#fff" stroke-width="1" stroke-linejoin="round"/></g></svg>
<div class="card" style="left:449.50px;top:353.90px;width:208.20px;height:90.5px"></div>
<div class="t" style="left:455.70px;top:362.19px;font-size:10.4px;line-height:10.4px;color:#232428;font-weight:400;-webkit-text-stroke:0.25px #232428;">Jaime Colin</div>
<div class="t" style="left:456.10px;top:386.57px;font-size:8.3px;line-height:8.3px;color:#666a72;font-weight:400;-webkit-text-stroke:0.4px #666a72;">Opportunity Source:</div>
<div class="t" style="left:536.70px;top:386.57px;font-size:8.3px;line-height:8.3px;color:#80848c;font-weight:400;-webkit-text-stroke:0.1px #80848c;">Referral</div>
<div class="t" style="left:456.10px;top:407.07px;font-size:8.3px;line-height:8.3px;color:#666a72;font-weight:400;-webkit-text-stroke:0.4px #666a72;">Opportunity Value:</div>
<div class="t" style="left:528.10px;top:405.54px;font-size:8.1px;line-height:8.1px;color:#5a5e66;font-weight:400;-webkit-text-stroke:0.35px #5a5e66;">$162.96</div>
<div class="hc" style="left:666.00px;width:208.00px;border-top-color:#b5c6f3"></div>
<div class="t" style="left:672.50px;top:15.77px;font-size:9.6px;line-height:9.6px;color:#18181c;font-weight:700;-webkit-text-stroke:0.2px #18181c;">Rebooking &amp; Loyalty</div>
<div class="t" style="left:671.30px;top:35.65px;font-size:8.2px;line-height:8.2px;color:#868a96;font-weight:400;-webkit-text-stroke:0.1px #868a96;">8 Opportunities</div>
<div class="t" style="left:734.70px;top:34.72px;font-size:8.0px;line-height:8.0px;color:#18181c;font-weight:700;-webkit-text-stroke:0.15px #18181c;">$ 5,825,023,82</div>
<div class="card" style="left:666.00px;top:62.00px;width:208.00px;height:90.6px"></div>
<div class="t" style="left:672.00px;top:70.29px;font-size:10.4px;line-height:10.4px;color:#232428;font-weight:400;-webkit-text-stroke:0.25px #232428;">_anosa_</div>
<div class="t" style="left:672.60px;top:94.67px;font-size:8.3px;line-height:8.3px;color:#666a72;font-weight:400;-webkit-text-stroke:0.4px #666a72;">Opportunity Source:</div>
<div class="t" style="left:753.20px;top:94.67px;font-size:8.3px;line-height:8.3px;color:#80848c;font-weight:400;-webkit-text-stroke:0.1px #80848c;">Website</div>
<div class="t" style="left:672.60px;top:115.17px;font-size:8.3px;line-height:8.3px;color:#666a72;font-weight:400;-webkit-text-stroke:0.4px #666a72;">Opportunity Value:</div>
<div class="t" style="left:752.80px;top:115.17px;font-size:8.3px;line-height:8.3px;color:#80848c;font-weight:400;-webkit-text-stroke:0.1px #80848c;">$1,200,</div>
<svg class="ic" style="left:670.40px;top:135.00px" width="13.2" height="13.2" viewBox="0 0 24 24" fill="none" stroke="#50545b" stroke-width="1.75" stroke-linecap="round" stroke-linejoin="round"><path d="M5 4h4l2 5l-2.5 1.5a11 11 0 0 0 5 5l1.5 -2.5l5 2v4a2 2 0 0 1 -2 2a16 16 0 0 1 -15 -15a2 2 0 0 1 2 -2"/><path d="M15 7a2 2 0 0 1 2 2M15 3a6 6 0 0 1 6 6"/></svg>
<svg class="ic" style="left:689.50px;top:136.30px" width="10.2" height="10.2" viewBox="0 0 24 24" fill="none" stroke="#50545b" stroke-width="2" stroke-linecap="round" stroke-linejoin="round"><path d="M3 21.5V12.5A9.25 9.25 0 1 1 12.25 21.5Z"/><g fill="#5a5e65" stroke="none"><circle cx="8" cy="12.5" r="1.35"/><circle cx="12.25" cy="12.5" r="1.35"/><circle cx="16.5" cy="12.5" r="1.35"/></g></svg>
<svg class="ic" style="left:707.20px;top:136.00px" width="10.6" height="10.6" viewBox="0 0 24 24" fill="none" stroke="#50545b" stroke-width="2" stroke-linecap="round" stroke-linejoin="round"><path d="M12.586 2.586A2 2 0 0 0 11.172 2H4a2 2 0 0 0-2 2v7.172a2 2 0 0 0 .586 1.414l8.704 8.704a2.426 2.426 0 0 0 3.42 0l6.58-6.58a2.426 2.426 0 0 0 0-3.42z"/><circle cx="7.5" cy="7.5" r=".8"/></svg>
<svg class="ic" style="left:712.60px;top:132.90px;z-index:4" width="9.6" height="9.6" viewBox="-4.8 -4.8 9.6 9.6"><circle r="4.8" fill="#1b5be3"/><g transform="scale(0.78)"><path d="M-1 -1.9 L0.5 -2.9 V2.9" fill="none" stroke="#fff" stroke-width="1" stroke-linejoin="round"/></g></svg>
<div class="card" style="left:666.00px;top:158.50px;width:208.00px;height:91.6px"></div>
<div class="t" style="left:672.00px;top:166.79px;font-size:10.4px;line-height:10.4px;color:#232428;font-weight:400;-webkit-text-stroke:0.25px #232428;">itsjennykatrina</div>
<div class="t" style="left:672.60px;top:191.17px;font-size:8.3px;line-height:8.3px;color:#666a72;font-weight:400;-webkit-text-stroke:0.4px #666a72;">Opportunity Source:</div>
<div class="t" style="left:753.20px;top:191.17px;font-size:8.3px;line-height:8.3px;color:#80848c;font-weight:400;-webkit-text-stroke:0.1px #80848c;">Instagram</div>
<div class="t" style="left:672.60px;top:211.67px;font-size:8.3px;line-height:8.3px;color:#666a72;font-weight:400;-webkit-text-stroke:0.4px #666a72;">Opportunity Value:</div>
<div class="t" style="left:752.80px;top:211.67px;font-size:8.3px;line-height:8.3px;color:#80848c;font-weight:400;-webkit-text-stroke:0.1px #80848c;">$750,</div>
<svg class="ic" style="left:672.50px;top:232.80px" width="10.2" height="10.2" viewBox="0 0 24 24" fill="none" stroke="#50545b" stroke-width="2" stroke-linecap="round" stroke-linejoin="round"><path d="M3 21.5V12.5A9.25 9.25 0 1 1 12.25 21.5Z"/><g fill="#5a5e65" stroke="none"><circle cx="8" cy="12.5" r="1.35"/><circle cx="12.25" cy="12.5" r="1.35"/><circle cx="16.5" cy="12.5" r="1.35"/></g></svg>
<svg class="ic" style="left:690.20px;top:232.50px" width="10.6" height="10.6" viewBox="0 0 24 24" fill="none" stroke="#50545b" stroke-width="2" stroke-linecap="round" stroke-linejoin="round"><path d="M12.586 2.586A2 2 0 0 0 11.172 2H4a2 2 0 0 0-2 2v7.172a2 2 0 0 0 .586 1.414l8.704 8.704a2.426 2.426 0 0 0 3.42 0l6.58-6.58a2.426 2.426 0 0 0 0-3.42z"/><circle cx="7.5" cy="7.5" r=".8"/></svg>
<svg class="ic" style="left:695.60px;top:229.40px;z-index:4" width="9.6" height="9.6" viewBox="-4.8 -4.8 9.6 9.6"><circle r="4.8" fill="#1b5be3"/><g transform="scale(0.78)"><path d="M-1 -1.9 L0.5 -2.9 V2.9" fill="none" stroke="#fff" stroke-width="1" stroke-linejoin="round"/></g></svg>
<div class="card" style="left:666.00px;top:256.50px;width:208.00px;height:91.3px"></div>
<div class="t" style="left:672.00px;top:264.79px;font-size:10.4px;line-height:10.4px;color:#232428;font-weight:400;-webkit-text-stroke:0.25px #232428;">julrriaa</div>
<div class="t" style="left:672.60px;top:289.17px;font-size:8.3px;line-height:8.3px;color:#666a72;font-weight:400;-webkit-text-stroke:0.4px #666a72;">Opportunity Source:</div>
<div class="t" style="left:753.20px;top:289.17px;font-size:8.3px;line-height:8.3px;color:#80848c;font-weight:400;-webkit-text-stroke:0.1px #80848c;">Instagram</div>
<div class="t" style="left:672.60px;top:309.67px;font-size:8.3px;line-height:8.3px;color:#666a72;font-weight:400;-webkit-text-stroke:0.4px #666a72;">Opportunity Value:</div>
<div class="t" style="left:752.80px;top:309.67px;font-size:8.3px;line-height:8.3px;color:#80848c;font-weight:400;-webkit-text-stroke:0.1px #80848c;">$1,200,</div>
<svg class="ic" style="left:670.40px;top:329.50px" width="13.2" height="13.2" viewBox="0 0 24 24" fill="none" stroke="#50545b" stroke-width="1.75" stroke-linecap="round" stroke-linejoin="round"><path d="M5 4h4l2 5l-2.5 1.5a11 11 0 0 0 5 5l1.5 -2.5l5 2v4a2 2 0 0 1 -2 2a16 16 0 0 1 -15 -15a2 2 0 0 1 2 -2"/><path d="M15 7a2 2 0 0 1 2 2M15 3a6 6 0 0 1 6 6"/></svg>
<svg class="ic" style="left:689.50px;top:330.80px" width="10.2" height="10.2" viewBox="0 0 24 24" fill="none" stroke="#50545b" stroke-width="2" stroke-linecap="round" stroke-linejoin="round"><path d="M3 21.5V12.5A9.25 9.25 0 1 1 12.25 21.5Z"/><g fill="#5a5e65" stroke="none"><circle cx="8" cy="12.5" r="1.35"/><circle cx="12.25" cy="12.5" r="1.35"/><circle cx="16.5" cy="12.5" r="1.35"/></g></svg>
<svg class="ic" style="left:707.20px;top:330.50px" width="10.6" height="10.6" viewBox="0 0 24 24" fill="none" stroke="#50545b" stroke-width="2" stroke-linecap="round" stroke-linejoin="round"><path d="M12.586 2.586A2 2 0 0 0 11.172 2H4a2 2 0 0 0-2 2v7.172a2 2 0 0 0 .586 1.414l8.704 8.704a2.426 2.426 0 0 0 3.42 0l6.58-6.58a2.426 2.426 0 0 0 0-3.42z"/><circle cx="7.5" cy="7.5" r=".8"/></svg>
<svg class="ic" style="left:712.60px;top:327.40px;z-index:4" width="9.6" height="9.6" viewBox="-4.8 -4.8 9.6 9.6"><circle r="4.8" fill="#1b5be3"/><g transform="scale(0.78)"><path d="M-1 -1.9 L0.5 -2.9 V2.9" fill="none" stroke="#fff" stroke-width="1" stroke-linejoin="round"/></g></svg>
<div class="card" style="left:666.00px;top:353.90px;width:208.00px;height:90.5px"></div>
<div class="t" style="left:672.00px;top:362.19px;font-size:10.4px;line-height:10.4px;color:#232428;font-weight:400;-webkit-text-stroke:0.25px #232428;">Cindy</div>
<div class="t" style="left:672.60px;top:386.57px;font-size:8.3px;line-height:8.3px;color:#666a72;font-weight:400;-webkit-text-stroke:0.4px #666a72;">Opportunity Source:</div>
<div class="t" style="left:753.20px;top:386.57px;font-size:8.3px;line-height:8.3px;color:#80848c;font-weight:400;-webkit-text-stroke:0.1px #80848c;">Referral</div>
<div class="t" style="left:672.60px;top:407.07px;font-size:8.3px;line-height:8.3px;color:#666a72;font-weight:400;-webkit-text-stroke:0.4px #666a72;">Opportunity Value:</div>
<div class="t" style="left:752.80px;top:407.07px;font-size:8.3px;line-height:8.3px;color:#80848c;font-weight:400;-webkit-text-stroke:0.1px #80848c;">$400,</div>
<div class="hc" style="left:882.70px;width:208.00px;border-top-color:#8db3f0"></div>
<div class="t" style="left:887.45px;top:19.17px;font-size:9.6px;line-height:9.6px;color:#28292e;font-weight:700;-webkit-text-stroke:0.2px #28292e;">Pending</div>
<div class="t" style="left:888.00px;top:35.65px;font-size:8.2px;line-height:8.2px;color:#868a96;font-weight:400;-webkit-text-stroke:0.1px #868a96;">2 Opportunities</div>
<div class="t" style="left:950.70px;top:34.60px;font-size:8.15px;line-height:8.15px;color:#28292e;font-weight:700;-webkit-text-stroke:0.15px #28292e;">$2,515,000</div>
<div class="card" style="left:882.70px;top:62.00px;width:208.00px;height:90.6px"></div>
<div class="t" style="left:888.30px;top:70.29px;font-size:10.4px;line-height:10.4px;color:#232428;font-weight:400;-webkit-text-stroke:0.25px #232428;">nupasani0322</div>
<div class="t" style="left:889.30px;top:94.67px;font-size:8.3px;line-height:8.3px;color:#666a72;font-weight:400;-webkit-text-stroke:0.4px #666a72;">Opportunity Source:</div>
<div class="t" style="left:969.90px;top:94.67px;font-size:8.3px;line-height:8.3px;color:#80848c;font-weight:400;-webkit-text-stroke:0.1px #80848c;">Instagram</div>
<div class="t" style="left:889.30px;top:115.17px;font-size:8.3px;line-height:8.3px;color:#666a72;font-weight:400;-webkit-text-stroke:0.4px #666a72;">Opportunity Value:</div>
<div class="t" style="left:969.10px;top:115.17px;font-size:8.3px;line-height:8.3px;color:#80848c;font-weight:400;-webkit-text-stroke:0.1px #80848c;">$2,000,</div>
<svg class="ic" style="left:887.10px;top:135.00px" width="13.2" height="13.2" viewBox="0 0 24 24" fill="none" stroke="#50545b" stroke-width="1.75" stroke-linecap="round" stroke-linejoin="round"><path d="M5 4h4l2 5l-2.5 1.5a11 11 0 0 0 5 5l1.5 -2.5l5 2v4a2 2 0 0 1 -2 2a16 16 0 0 1 -15 -15a2 2 0 0 1 2 -2"/><path d="M15 7a2 2 0 0 1 2 2M15 3a6 6 0 0 1 6 6"/></svg>
<svg class="ic" style="left:906.20px;top:136.30px" width="10.2" height="10.2" viewBox="0 0 24 24" fill="none" stroke="#50545b" stroke-width="2" stroke-linecap="round" stroke-linejoin="round"><path d="M3 21.5V12.5A9.25 9.25 0 1 1 12.25 21.5Z"/><g fill="#5a5e65" stroke="none"><circle cx="8" cy="12.5" r="1.35"/><circle cx="12.25" cy="12.5" r="1.35"/><circle cx="16.5" cy="12.5" r="1.35"/></g></svg>
<svg class="ic" style="left:923.90px;top:136.00px" width="10.6" height="10.6" viewBox="0 0 24 24" fill="none" stroke="#50545b" stroke-width="2" stroke-linecap="round" stroke-linejoin="round"><path d="M12.586 2.586A2 2 0 0 0 11.172 2H4a2 2 0 0 0-2 2v7.172a2 2 0 0 0 .586 1.414l8.704 8.704a2.426 2.426 0 0 0 3.42 0l6.58-6.58a2.426 2.426 0 0 0 0-3.42z"/><circle cx="7.5" cy="7.5" r=".8"/></svg>
<svg class="ic" style="left:929.30px;top:132.90px;z-index:4" width="9.6" height="9.6" viewBox="-4.8 -4.8 9.6 9.6"><circle r="4.8" fill="#1b5be3"/><g transform="scale(0.78)"><path d="M-1 -1.9 L0.5 -2.9 V2.9" fill="none" stroke="#fff" stroke-width="1" stroke-linejoin="round"/></g></svg>
<div class="card" style="left:882.70px;top:158.50px;width:208.00px;height:91.6px"></div>
<div class="t" style="left:888.30px;top:166.79px;font-size:10.4px;line-height:10.4px;color:#232428;font-weight:400;-webkit-text-stroke:0.25px #232428;">Cristian Rojas</div>
<div class="t" style="left:889.30px;top:191.17px;font-size:8.3px;line-height:8.3px;color:#666a72;font-weight:400;-webkit-text-stroke:0.4px #666a72;">Opportunity Source:</div>
<div class="t" style="left:969.90px;top:191.17px;font-size:8.3px;line-height:8.3px;color:#80848c;font-weight:400;-webkit-text-stroke:0.1px #80848c;">Instagram</div>
<div class="t" style="left:889.30px;top:211.67px;font-size:8.3px;line-height:8.3px;color:#666a72;font-weight:400;-webkit-text-stroke:0.4px #666a72;">Opportunity Value:</div>
<div class="t" style="left:969.10px;top:211.67px;font-size:8.3px;line-height:8.3px;color:#80848c;font-weight:400;-webkit-text-stroke:0.1px #80848c;">$515,</div>
<svg class="ic" style="left:887.10px;top:231.50px" width="13.2" height="13.2" viewBox="0 0 24 24" fill="none" stroke="#50545b" stroke-width="1.75" stroke-linecap="round" stroke-linejoin="round"><path d="M5 4h4l2 5l-2.5 1.5a11 11 0 0 0 5 5l1.5 -2.5l5 2v4a2 2 0 0 1 -2 2a16 16 0 0 1 -15 -15a2 2 0 0 1 2 -2"/><path d="M15 7a2 2 0 0 1 2 2M15 3a6 6 0 0 1 6 6"/></svg>
<svg class="ic" style="left:906.20px;top:232.80px" width="10.2" height="10.2" viewBox="0 0 24 24" fill="none" stroke="#50545b" stroke-width="2" stroke-linecap="round" stroke-linejoin="round"><path d="M3 21.5V12.5A9.25 9.25 0 1 1 12.25 21.5Z"/><g fill="#5a5e65" stroke="none"><circle cx="8" cy="12.5" r="1.35"/><circle cx="12.25" cy="12.5" r="1.35"/><circle cx="16.5" cy="12.5" r="1.35"/></g></svg>
<svg class="ic" style="left:923.90px;top:232.50px" width="10.6" height="10.6" viewBox="0 0 24 24" fill="none" stroke="#50545b" stroke-width="2" stroke-linecap="round" stroke-linejoin="round"><path d="M12.586 2.586A2 2 0 0 0 11.172 2H4a2 2 0 0 0-2 2v7.172a2 2 0 0 0 .586 1.414l8.704 8.704a2.426 2.426 0 0 0 3.42 0l6.58-6.58a2.426 2.426 0 0 0 0-3.42z"/><circle cx="7.5" cy="7.5" r=".8"/></svg>
<svg class="ic" style="left:929.30px;top:229.40px;z-index:4" width="9.6" height="9.6" viewBox="-4.8 -4.8 9.6 9.6"><circle r="4.8" fill="#1b5be3"/><g transform="scale(0.78)"><path d="M-1 -1.9 L0.5 -2.9 V2.9" fill="none" stroke="#fff" stroke-width="1" stroke-linejoin="round"/></g></svg>
<div class="patch" style="left:142.7px;top:32px;width:26px;height:14px"></div>
<div class="patch" style="left:352.7px;top:32px;width:28px;height:14px"></div>
<div class="patch" style="left:565.7px;top:32px;width:30px;height:14px"></div>
<div class="patch" style="left:788.7px;top:32px;width:30px;height:14px"></div>
<div class="patch" style="left:68.7px;top:69px;width:42px;height:14px"></div>
<div class="patch" style="left:121.7px;top:112px;width:24px;height:15px"></div>
<div class="patch" style="left:132.7px;top:208px;width:35px;height:15px"></div>
<div class="patch" style="left:132.7px;top:305px;width:22px;height:15px"></div>
<div class="patch" style="left:82.7px;top:364px;width:25px;height:13px"></div>
<div class="patch" style="left:132.7px;top:402px;width:22px;height:15px"></div>
<div class="patch" style="left:341.7px;top:113px;width:42px;height:14px"></div>
<div class="patch" style="left:342.7px;top:208px;width:42px;height:14px"></div>
<div class="patch" style="left:342.7px;top:305px;width:42px;height:14px"></div>
<div class="patch" style="left:342.7px;top:402px;width:40px;height:14px"></div>
<div class="patch" style="left:567.7px;top:112px;width:20px;height:14px"></div>
<div class="patch" style="left:567.7px;top:208px;width:25px;height:14px"></div>
<div class="patch" style="left:552.7px;top:305px;width:22px;height:14px"></div>
<div class="patch" style="left:572.7px;top:402px;width:22px;height:14px"></div>
<div class="patch" style="left:787.7px;top:112px;width:37px;height:15px"></div>
<div class="patch" style="left:737.7px;top:208px;width:50px;height:15px"></div>
<div class="patch" style="left:772.7px;top:305px;width:50px;height:15px"></div>
<div class="patch" style="left:772.7px;top:402px;width:50px;height:15px"></div>
<div class="patch" style="left:942.7px;top:208px;width:35px;height:14px"></div>
</div>
</div></body></html>
